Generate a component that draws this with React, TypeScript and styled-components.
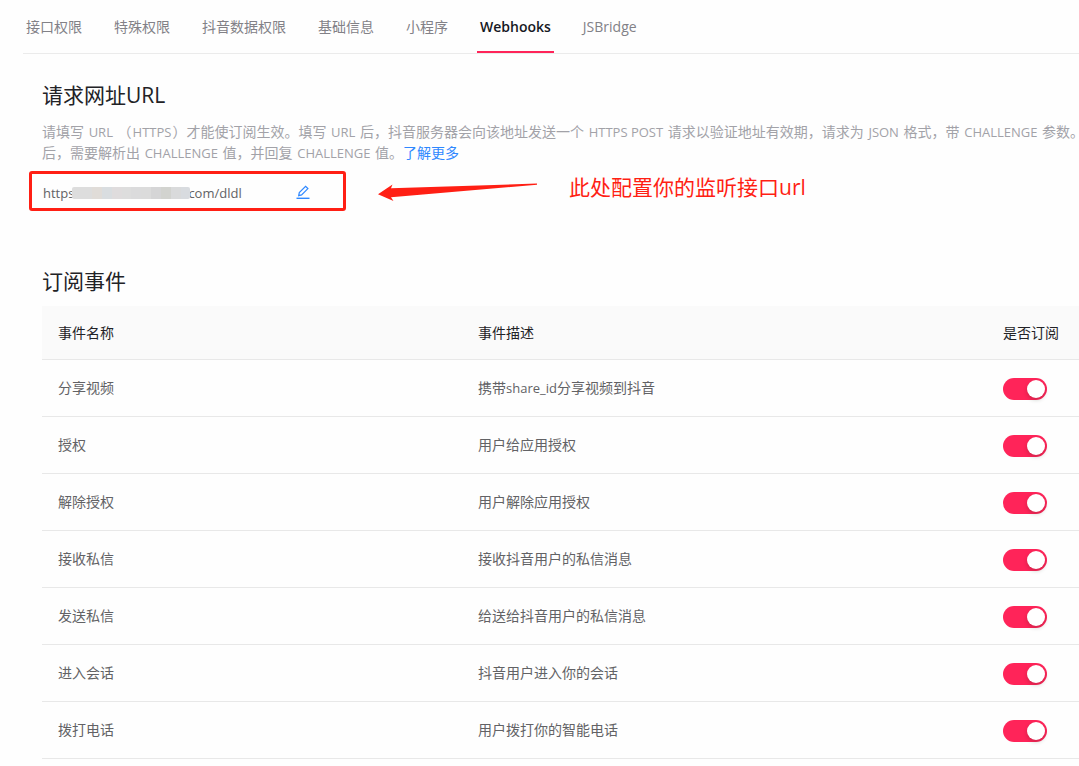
import React from "react";
import styled, { createGlobalStyle } from "styled-components";

const Global = createGlobalStyle`
  * { box-sizing: border-box; }
  body {
    margin: 0;
    background: #fefefe;
    color: #626265;
    font-family: "Open Sans", "Noto Sans CJK SC", sans-serif;
    font-size: 14px;
    line-height: 21px;
  }
`;

const Page = styled.div`
  overflow: hidden;
`;

const Tabs = styled.nav`
  display: flex;
  gap: 26px;
  margin-left: 23px;
  border-bottom: 1px solid #ebebeb;
`;

const Tab = styled.a<{ $active?: boolean }>`
  height: 53px;
  padding: 16px 3px 0;
  white-space: nowrap;
  text-decoration: none;
  color: ${(p) => (p.$active ? "#161823" : "#828187")};
  font-weight: ${(p) => (p.$active ? 600 : 400)};
  border-bottom: 2px solid ${(p) => (p.$active ? "#ff2459" : "transparent")};
`;

const Main = styled.main`
  padding: 25px 0 0 29px;
`;

const Section = styled.section`
  padding-left: 13px;
`;

const Title = styled.h2`
  margin: 0;
  font-size: 21px;
  line-height: 32px;
  font-weight: 400;
  color: #222226;
`;

const Description = styled.p`
  margin: 10px 0 8px;
  white-space: nowrap;
  color: #a2a2a8;
`;

const Latin = styled.span`
  font-size: 13px;
  line-height: 1;
`;

const Term = styled(Latin)`
  margin: 0 1px;
`;

const Link = styled.a`
  color: #2f88ff;
  text-decoration: none;
`;

const UrlRow = styled.div`
  display: flex;
  align-items: center;
`;

const UrlBox = styled.div`
  display: flex;
  align-items: center;
  width: 317px;
  height: 40px;
  padding: 4px 33px 0 11px;
  border: 3px solid #ff1f14;
  border-radius: 3px;
`;

const Mosaic = styled.span`
  position: relative;
  display: flex;
  flex: none;
  width: 118px;
  height: 12px;
  margin: 0 -2px;
  border-radius: 2px;
  overflow: hidden;
`;

const Tile = styled.span<{ $tone: string }>`
  flex: 1;
  background: ${(p) => p.$tone};
`;

const EditButton = styled.button`
  display: flex;
  margin-left: auto;
  padding: 0 0 2px;
  border: 0;
  background: none;
  color: #2f88ff;
  cursor: pointer;
`;

const Arrow = styled.svg`
  flex: none;
  margin-left: 32px;
`;

const Note = styled.span`
  align-self: flex-start;
  margin-left: 31px;
  font-size: 21px;
  line-height: 32px;
  white-space: nowrap;
  color: #ff1f14;
`;

const Events = styled(Section)`
  margin-top: 54px;
`;

const Table = styled.table`
  width: 100%;
  margin-top: 9px;
  table-layout: fixed;
  border-collapse: separate;
  border-spacing: 0;
`;

const HeadCell = styled.th<{ $width?: number }>`
  width: ${(p) => (p.$width ? `${p.$width}px` : "auto")};
  height: 54px;
  padding: 0 16px;
  text-align: left;
  white-space: nowrap;
  font-weight: 400;
  color: #222226;
  background: #fafafa;
  border-bottom: 1px solid #e8e8e8;
`;

const Cell = styled.td`
  height: 57px;
  padding: 0 16px 2px;
  border-bottom: 1px solid #e8e8e8;
`;

const Switch = styled.input`
  appearance: none;
  display: block;
  width: 44px;
  height: 22px;
  margin: 4px 0 0;
  border-radius: 11px;
  background: #c4c4c8;
  cursor: pointer;

  &::before {
    content: "";
    float: left;
    width: 18px;
    height: 18px;
    margin: 2px;
    border-radius: 50%;
    background: #fff;
    box-shadow: 0 2px 4px rgba(0, 35, 11, 0.2);
  }

  &:checked { background: #ff2459; }
  &:checked::before { margin-left: 24px; }
`;

const tabs = ["接口权限", "特殊权限", "抖音数据权限", "基础信息", "小程序", "Webhooks", "JSBridge"];

const tiles = ["#dddddd", "#dddddd", "#e0dcd8", "#d9dde0", "#dfdcdd", "#dddddd", "#dbdbdc", "#dbdbdb", "#d5d5d6", "#d2d3cf", "#d9dadb", "#d8dbdf"];

const events: [string, React.ReactNode][] = [
  ["分享视频", <>携带<Latin>share_id</Latin>分享视频到抖音</>],
  ["授权", "用户给应用授权"],
  ["解除授权", "用户解除应用授权"],
  ["接收私信", "接收抖音用户的私信消息"],
  ["发送私信", "给送给抖音用户的私信消息"],
  ["进入会话", "抖音用户进入你的会话"],
  ["拨打电话", "用户拨打你的智能电话"],
];

export default function App() {
  return (
    <Page>
      <Global />
      <Tabs>
        {tabs.map((t) => (
          <Tab key={t} href="#" $active={t === "Webhooks"}>{t}</Tab>
        ))}
      </Tabs>
      <Main>
        <Section>
          <Title>请求网址URL</Title>
          <Description>
            请填写 <Term>URL</Term> （<Term>HTTPS</Term>）才能使订阅生效。填写 <Term>URL</Term> 后，抖音服务器会向该地址发送一个 <Term>HTTPS POST</Term> 请求以验证地址有效期，请求为 <Term>JSON</Term> 格式，带 <Term>CHALLENGE</Term> 参数。
            <br />
            后，需要解析出 <Term>CHALLENGE</Term> 值，并回复 <Term>CHALLENGE</Term> 值。<Link href="#">了解更多</Link>
          </Description>
        </Section>
        <UrlRow>
          <UrlBox>
            <Latin>https</Latin>
            <Mosaic>
              {tiles.map((t, i) => <Tile key={i} $tone={t} />)}
            </Mosaic>
            <Latin>com/dldl</Latin>
            <EditButton type="button" aria-label="编辑">
              <svg width="14" height="14" viewBox="0 0 14 14" fill="none" stroke="currentColor">
                <path d="M0.5 13.3H13.5" strokeWidth="1.4" />
                <path d="M2.7 10.6L3.3 7.6L9.6 1.3L11.9 3.6L5.6 9.9Z" strokeWidth="1.2" />
              </svg>
            </EditButton>
          </UrlBox>
          <Arrow width="160" height="20" viewBox="0 0 160 20">
            <path d="M0 13.3L14.5 3.6L13 7.3L159 2.5V3.8L13 16.3L15.5 20Z" fill="#ff1f14" />
          </Arrow>
          <Note>此处配置你的监听接口url</Note>
        </UrlRow>
        <Events>
          <Title>订阅事件</Title>
          <Table>
            <thead>
              <tr>
                <HeadCell $width={420}>事件名称</HeadCell>
                <HeadCell>事件描述</HeadCell>
                <HeadCell $width={92}>是否订阅</HeadCell>
              </tr>
            </thead>
            <tbody>
              {events.map(([name, text]) => (
                <tr key={name}>
                  <Cell>{name}</Cell>
                  <Cell>{text}</Cell>
                  <Cell><Switch type="checkbox" role="switch" defaultChecked aria-label={name} /></Cell>
                </tr>
              ))}
            </tbody>
          </Table>
        </Events>
      </Main>
    </Page>
  );
}
